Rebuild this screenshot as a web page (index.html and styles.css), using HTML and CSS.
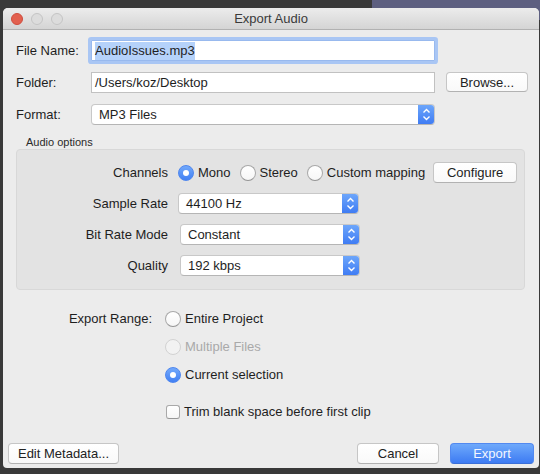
FILE: index.html
```html
<!DOCTYPE html>
<html>
<head>
<meta charset="utf-8">
<title>Export Audio</title>
<link rel="stylesheet" href="styles.css">
</head>
<body>
<div class="window">
  <div class="titlebar">
    <div class="lights">
      <span class="light red"></span>
      <span class="light"></span>
      <span class="light"></span>
    </div>
    <div class="title">Export Audio</div>
    <div></div>
  </div>

  <div class="content">
    <div class="top-grid">
      <span class="lbl">File Name:</span>
      <div class="field focus"><span class="selected">AudioIssues.mp3</span></div>
      <span></span>

      <span class="lbl">Folder:</span>
      <div class="field">/Users/koz/Desktop</div>
      <button class="btn browse">Browse...</button>

      <span class="lbl">Format:</span>
      <div class="select wide">
        <span class="sel-text">MP3 Files</span>
        <span class="arrow"><svg width="17" height="21" viewBox="0 0 17 21"><polyline points="5.5,8.5 8.5,5.5 11.5,8.5" fill="none" stroke="#fff" stroke-width="1.4"/><polyline points="5.5,12.5 8.5,15.5 11.5,12.5" fill="none" stroke="#fff" stroke-width="1.4"/></svg></span>
      </div>
      <span></span>
    </div>

    <div class="group-title">Audio options</div>
    <div class="group">
      <span class="glbl">Channels</span>
      <div class="channels">
        <label class="radio"><span class="circle on"></span>Mono</label>
        <label class="radio"><span class="circle"></span>Stereo</label>
        <label class="radio"><span class="circle"></span>Custom mapping</label>
        <button class="btn configure">Configure</button>
      </div>

      <span class="glbl">Sample Rate</span>
      <div class="select gsel">
        <span class="sel-text">44100 Hz</span>
        <span class="arrow"><svg width="17" height="21" viewBox="0 0 17 21"><polyline points="5.5,8.5 8.5,5.5 11.5,8.5" fill="none" stroke="#fff" stroke-width="1.4"/><polyline points="5.5,12.5 8.5,15.5 11.5,12.5" fill="none" stroke="#fff" stroke-width="1.4"/></svg></span>
      </div>

      <span class="glbl">Bit Rate Mode</span>
      <div class="select gsel shift">
        <span class="sel-text">Constant</span>
        <span class="arrow"><svg width="17" height="21" viewBox="0 0 17 21"><polyline points="5.5,8.5 8.5,5.5 11.5,8.5" fill="none" stroke="#fff" stroke-width="1.4"/><polyline points="5.5,12.5 8.5,15.5 11.5,12.5" fill="none" stroke="#fff" stroke-width="1.4"/></svg></span>
      </div>

      <span class="glbl">Quality</span>
      <div class="select gsel shift">
        <span class="sel-text">192 kbps</span>
        <span class="arrow"><svg width="17" height="21" viewBox="0 0 17 21"><polyline points="5.5,8.5 8.5,5.5 11.5,8.5" fill="none" stroke="#fff" stroke-width="1.4"/><polyline points="5.5,12.5 8.5,15.5 11.5,12.5" fill="none" stroke="#fff" stroke-width="1.4"/></svg></span>
      </div>
    </div>

    <div class="range">
      <span class="rlbl">Export Range:</span>
      <label class="radio"><span class="circle"></span>Entire Project</label>
      <label class="radio disabled"><span class="circle"></span>Multiple Files</label>
      <label class="radio"><span class="circle on"></span>Current selection</label>
      <label class="check"><span class="box"></span>Trim blank space before first clip</label>
    </div>
  </div>

  <div class="footer">
    <button class="btn meta">Edit Metadata...</button>
    <div class="spacer"></div>
    <button class="btn cancel">Cancel</button>
    <button class="btn primary">Export</button>
  </div>
</div>
</body>
</html>
```

FILE: styles.css
```css
* { box-sizing: border-box; }

html, body { margin: 0; }

body {
  width: 540px;
  height: 474px;
  overflow: hidden;
  padding: 8px 1px 0 3px;
  background:
    linear-gradient(#5d5f80, #5d5f80) 372px 0 / 168px 20px no-repeat,
    #393939;
  font-family: "Liberation Sans", Arial, sans-serif;
  font-size: 13px;
  color: #1e1e1e;
}

.window {
  width: 536px;
  height: 460px;
  background: #ececec;
  border-radius: 5px 5px 4px 4px;
  display: flex;
  flex-direction: column;
  overflow: hidden;
}

.titlebar {
  flex: none;
  height: 22px;
  background: linear-gradient(#ececec, #d4d4d4);
  border-bottom: 1px solid #b1b1b1;
  display: grid;
  grid-template-columns: 1fr auto 1fr;
  align-items: center;
}

.lights {
  display: flex;
  gap: 8px;
  padding-left: 8px;
}

.light {
  width: 12px;
  height: 12px;
  border-radius: 50%;
  background: #dcdcdc;
  border: 1px solid #c4c4c4;
}

.light.red {
  background: #e2604f;
  border-color: #cf4c3d;
}

.title {
  font-size: 13px;
  color: #3a3a3a;
  line-height: 16px;
  padding-top: 1px;
}

.content {
  flex: 1;
  padding: 10px 0 0 13px;
}

.top-grid {
  display: grid;
  grid-template-columns: 75px 344px 93px;
  grid-auto-rows: 21px;
  row-gap: 11px;
  align-items: center;
}

.lbl { line-height: 16px; }

.field {
  height: 21px;
  background: #fff;
  border: 1px solid #c1c1c1;
  padding: 0 3px;
  display: flex;
  align-items: center;
  white-space: nowrap;
}

.field.focus {
  border-color: #98b9ee;
  border-radius: 1px;
  box-shadow: 0 0 0 3px #a9c6f4;
}

.selected {
  background: #b5d2fa;
  line-height: 18px;
}

.btn {
  height: 21px;
  padding: 0;
  margin: 0;
  font-family: inherit;
  font-size: 13px;
  color: #222;
  background: linear-gradient(#ffffff, #f9f9f9);
  border: 1px solid #c6c6c6;
  border-bottom-color: #b2b2b2;
  border-radius: 4px;
}

.browse {
  width: 82px;
  margin-left: 11px;
  height: 20px;
  align-self: start;
}

.select {
  height: 21px;
  display: flex;
  align-items: stretch;
  background: #fff;
  border: 1px solid #c8c8c8;
  border-bottom-color: #b5b5b5;
  border-radius: 4px;
  overflow: hidden;
}

.sel-text {
  padding-left: 7px;
  display: flex;
  align-items: center;
  white-space: nowrap;
}

.arrow {
  margin-left: auto;
  width: 17px;
  margin-top: -1px;
  margin-bottom: -1px;
  margin-right: -1px;
  background: linear-gradient(#6fa8fb, #3d7af3);
  display: flex;
  align-items: center;
  justify-content: center;
}

.group-title {
  margin: 11px 0 0 10px;
  font-size: 11px;
  line-height: 13px;
  color: #2a2a2a;
}

.group {
  width: 509px;
  background: #e3e3e3;
  border: 1px solid #d8d8d8;
  border-radius: 4px;
  padding: 12px 0 13px;
  display: grid;
  grid-template-columns: 151px 1fr;
  column-gap: 10px;
  grid-auto-rows: 21px;
  row-gap: 10px;
  align-items: center;
}

.glbl {
  text-align: right;
  line-height: 16px;
}

.channels {
  display: flex;
  align-items: center;
  gap: 9px;
}

.configure {
  width: 84px;
  margin-left: -1px;
}

.gsel { width: 181px; }
.gsel.shift { margin-left: 2px; width: 180px; }

.radio, .check {
  display: flex;
  align-items: center;
  gap: 4px;
  white-space: nowrap;
  line-height: 16px;
}

.circle {
  width: 16px;
  height: 16px;
  border-radius: 50%;
  border: 1px solid #a9a9a9;
  border-bottom-color: #959595;
  background: linear-gradient(#ffffff, #f6f6f6);
  flex: none;
  display: flex;
  align-items: center;
  justify-content: center;
}

.circle.on {
  border-color: #4f87ef;
  background: linear-gradient(#72a9fb, #4180f4);
}

.circle.on::after {
  content: "";
  width: 6px;
  height: 6px;
  border-radius: 50%;
  background: #fff;
}

.radio.disabled { color: #a9a9a9; }
.radio.disabled .circle {
  border-color: #d2d2d2;
  background: #f2f2f2;
}

.range {
  margin-top: 18px;
  display: grid;
  grid-template-columns: 136px 1fr;
  column-gap: 13px;
  grid-auto-rows: 22px;
  row-gap: 6px;
  align-items: center;
}

.range .radio { grid-column: 2; }

.rlbl {
  grid-column: 1;
  grid-row: 1;
  text-align: right;
  line-height: 16px;
}

.check {
  grid-column: 2;
  margin-top: 18px;
  padding-left: 1px;
}

.box {
  width: 14px;
  height: 14px;
  border: 1px solid #a9a9a9;
  border-bottom-color: #979797;
  border-radius: 3px;
  background: linear-gradient(#ffffff, #f6f6f6);
  flex: none;
}

.footer {
  flex: none;
  display: flex;
  align-items: flex-end;
  gap: 11px;
  padding: 0 5px 4px;
}

.spacer { flex: 1; }

.meta { width: 111px; }
.cancel { width: 82px; }

.primary {
  width: 84px;
  color: #f4f7ff;
  background: linear-gradient(#6ea9fb, #3d7bf3);
  border-color: #5289f0;
  border-bottom-color: #3a6fd8;
}
```
